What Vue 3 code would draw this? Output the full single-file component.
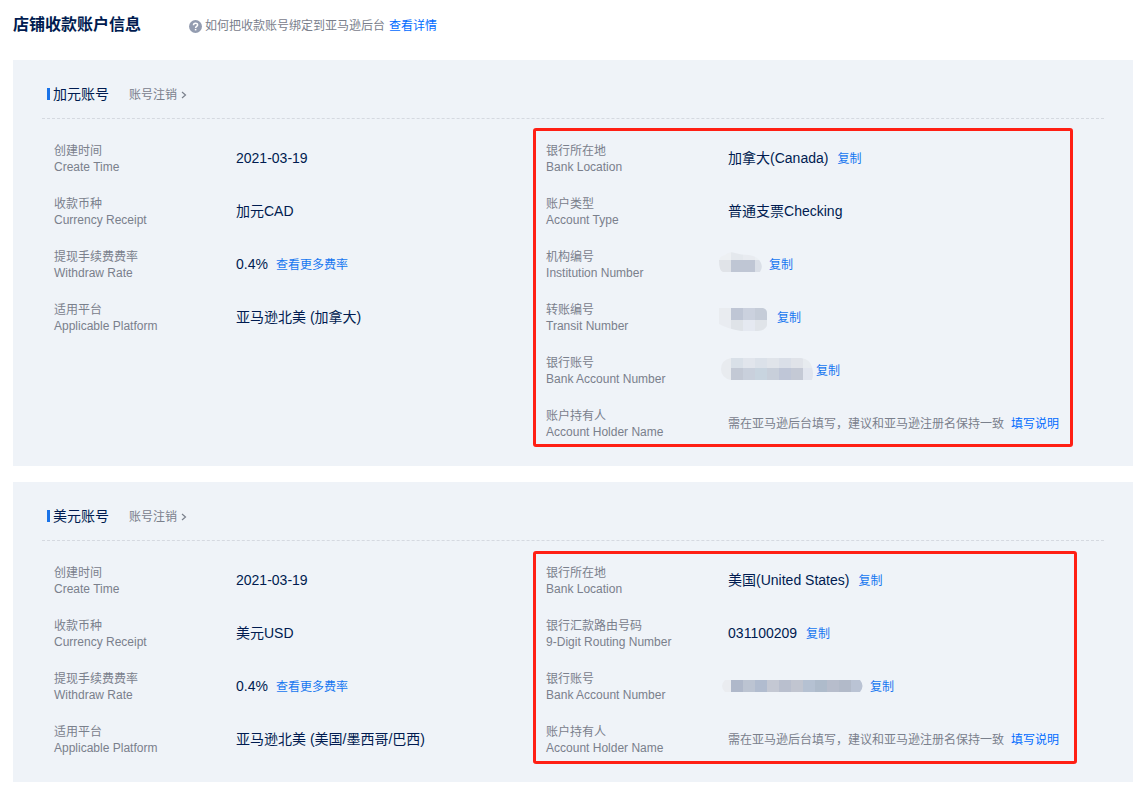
<script setup>
const maskA = {
  width: 41,
  clip: 'M0 9Q1 5 6 4Q10 0 16 2Q22 4 30 4Q39 5 42 12Q44 17 41 21H4Q0 20 0 9Z',
  cells: [
    [0, 0, 12, 9, '#edf0f3'], [12, 0, 12, 9, '#e4e8ed'], [24, 0, 12, 9, '#e8ebf0'], [36, 0, 8, 9, '#ebeff3'],
    [0, 9, 12, 12, '#e0e3e8'], [12, 9, 24, 12, '#bfc6d4'], [36, 9, 8, 12, '#dadfe7']
  ]
}
const maskB = {
  width: 49,
  clip: 'M0 4H44Q48 5 48 9V21Q47 26 39 27H22Q9 25 0 20Z',
  cells: [
    [0, 4, 12, 12, '#e9ecf0'], [12, 4, 12, 12, '#bfc6d5'], [24, 4, 12, 12, '#cbd1de'], [36, 4, 12, 12, '#c5ccd8'],
    [0, 16, 12, 11, '#e9ecf1'], [12, 16, 12, 11, '#dfe3e8'], [24, 16, 12, 11, '#e5e9f1'], [36, 16, 12, 11, '#e0e4e9']
  ]
}
const maskC = {
  width: 88,
  clip: 'M12 1H82Q91 2 93 10Q95 17 93 23H12Q2 21 2 12Q2 3 12 1Z',
  cells: [
    [0, 1, 12, 22, '#e8ebef'],
    ...['#d9e0e8', '#e1e5ec', '#dbe1e9', '#e0e4ea', '#dadfe8', '#e0e3e9'].map((c, i) => [12 + i * 12, 1, 12, 10, c]),
    ...['#c3c9d5', '#c9d0dc', '#c8d4df', '#c8cfda', '#bfc6d7', '#c4c9d5'].map((c, i) => [12 + i * 12, 11, 12, 12, c]),
    [84, 1, 12, 10, '#e7ebef'], [84, 11, 12, 12, '#e1e5ee']
  ]
}
const maskD = {
  width: 142,
  clip: 'M6 7H141Q146 13 141 19H6Q0 13 6 7Z',
  cells: [
    [0, 7, 12, 12, '#eaecf0'],
    ...['#afb8ca', '#bcc4d2', '#b1bccf', '#c4c8d3', '#b9bfce', '#c1c5d0', '#b5c1d2', '#aebbcb', '#b7bdcc', '#b2bac9', '#bac3d4']
      .map((c, i) => [12 + i * 12, 7, 12, 12, c])
  ]
}

const holder = {
  cn: '账户持有人',
  en: 'Account Holder Name',
  note: '需在亚马逊后台填写，建议和亚马逊注册名保持一致',
  link: '填写说明'
}
const basics = (currency, platform) => [
  { cn: '创建时间', en: 'Create Time', value: '2021-03-19' },
  { cn: '收款币种', en: 'Currency Receipt', value: currency },
  { cn: '提现手续费费率', en: 'Withdraw Rate', value: '0.4%', link: '查看更多费率' },
  { cn: '适用平台', en: 'Applicable Platform', value: platform }
]

const accounts = [
  {
    id: 'cad',
    title: '加元账号',
    basic: basics('加元CAD', '亚马逊北美 (加拿大)'),
    bank: [
      { cn: '银行所在地', en: 'Bank Location', value: '加拿大(Canada)', copy: true },
      { cn: '账户类型', en: 'Account Type', value: '普通支票Checking' },
      { cn: '机构编号', en: 'Institution Number', mask: maskA, copy: true },
      { cn: '转账编号', en: 'Transit Number', mask: maskB, copy: true },
      { cn: '银行账号', en: 'Bank Account Number', mask: maskC, copy: true },
      holder
    ]
  },
  {
    id: 'usd',
    title: '美元账号',
    basic: basics('美元USD', '亚马逊北美 (美国/墨西哥/巴西)'),
    bank: [
      { cn: '银行所在地', en: 'Bank Location', value: '美国(United States)', copy: true },
      { cn: '银行汇款路由号码', en: '9-Digit Routing Number', value: '031100209', copy: true },
      { cn: '银行账号', en: 'Bank Account Number', mask: maskD, copy: true },
      holder
    ]
  }
]
</script>

<template>
  <main class="page">
    <header class="page-head">
      <h1>店铺收款账户信息</h1>
      <p class="help">
        <svg class="help-icon" viewBox="0 0 13 13" aria-hidden="true">
          <circle cx="6.5" cy="6.5" r="6.5" fill="#939cb0" />
          <path d="M4.5 5.2C4.5 2.5 8.6 2.5 8.6 5C8.6 6.4 6.6 6.4 6.6 8" fill="none" stroke="#fff" stroke-width="1.5" />
          <rect x="5.8" y="8.9" width="1.6" height="1.5" fill="#fff" />
        </svg>
        <span>如何把收款账号绑定到亚马逊后台</span>
        <a href="#" class="help-link">查看详情</a>
      </p>
    </header>

    <section v-for="acc in accounts" :key="acc.id" class="card" :class="acc.id">
      <div class="card-head">
        <h2>{{ acc.title }}</h2>
        <button type="button" class="cancel">
          账号注销
          <svg class="chevron" viewBox="0 0 6 8" aria-hidden="true">
            <path d="M1 1L4.5 4L1 7" fill="none" stroke="currentColor" stroke-width="1.2" />
          </svg>
        </button>
      </div>
      <div class="card-body">
        <dl v-for="(rows, side) in [acc.basic, acc.bank]" :key="side" :class="{ marked: side === 1 }">
          <div v-for="row in rows" :key="row.en" class="row">
            <dt><span>{{ row.cn }}</span><span>{{ row.en }}</span></dt>
            <dd>
              <span v-if="row.value" class="value">{{ row.value }}</span>
              <span v-if="row.note" class="note">{{ row.note }}</span>
              <svg v-if="row.mask" class="mask" :width="row.mask.width" height="27" aria-hidden="true">
                <clipPath :id="`${acc.id}-${row.mask.width}`"><path :d="row.mask.clip" /></clipPath>
                <g :clip-path="`url(#${acc.id}-${row.mask.width})`" shape-rendering="crispEdges">
                  <rect v-for="(c, i) in row.mask.cells" :key="i" :x="c[0]" :y="c[1]" :width="c[2]" :height="c[3]" :fill="c[4]" />
                </g>
              </svg>
              <a v-if="row.link" href="#" :class="row.note ? 'note-link' : 'link'">{{ row.link }}</a>
              <button v-if="row.copy" type="button" class="copy">复制</button>
            </dd>
          </div>
        </dl>
      </div>
    </section>
  </main>
</template>

<style>
body {
  margin: 0;
  background: #fff;
}
</style>

<style scoped>
.page {
  padding: 0 11px 8px 13px;
  font-family: "Liberation Sans", "Noto Sans CJK SC", sans-serif;
  font-size: 12px;
  line-height: 16px;
  color: #7a808c;
}
h1, h2, p, dl, dd {
  margin: 0;
}
a {
  text-decoration: none;
}
button {
  padding: 0;
  border: 0;
  background: none;
  font: inherit;
  line-height: 16px;
  cursor: pointer;
}
.page-head {
  display: flex;
  align-items: center;
  gap: 48px;
  height: 50px;
  padding-bottom: 10px;
}
h1 {
  font-size: 16px;
  line-height: 24px;
  font-weight: 700;
  color: #001b50;
}
.help {
  display: flex;
  align-items: center;
  padding-top: 2px;
}
.help-icon {
  width: 13px;
  height: 13px;
  margin-right: 3px;
}
.help-link {
  margin-left: 4px;
  color: #006bff;
}
.card {
  padding: 0 29px 16px;
  background: #eff3f8;
}
.card + .card {
  margin-top: 16px;
}
.card-head {
  display: flex;
  align-items: center;
  gap: 20px;
  height: 48px;
  padding: 10px 0 0 5px;
  border-bottom: 1px dashed #d5d9e0;
}
h2 {
  display: flex;
  align-items: center;
  gap: 3px;
  font-size: 14px;
  line-height: 20px;
  font-weight: 400;
  color: #001b50;
}
h2::before {
  content: "";
  width: 3px;
  height: 12px;
  background: #1a73e8;
}
.cancel {
  display: flex;
  align-items: center;
  gap: 4px;
  padding-top: 2px;
  color: #7a808c;
}
.chevron {
  width: 6px;
  height: 8px;
}
.card-body {
  display: grid;
  grid-template-columns: 13fr 15fr;
  align-items: start;
  padding-top: 13px;
}
.marked {
  position: relative;
}
.marked::after {
  content: "";
  position: absolute;
  inset: -4px 31px 3px -2px;
  border: 3px solid #ff1f14;
  border-radius: 3px;
  pointer-events: none;
}
.usd .marked::after {
  inset: -3px 27px 2px -2px;
}
.row {
  display: flex;
  align-items: center;
  height: 53px;
  padding-left: 12px;
  white-space: nowrap;
}
.marked .row {
  padding-left: 11px;
}
dt {
  flex: none;
  width: 182px;
}
dt span {
  display: block;
}
dd {
  display: flex;
  align-items: center;
}
.value {
  padding-bottom: 2px;
  font-size: 14px;
  line-height: 20px;
  color: #001b50;
}
.mask {
  margin-left: -9px;
  overflow: visible;
}
.link, .copy {
  color: #1677f0;
}
.link {
  margin-left: 8px;
}
.copy {
  margin-left: 9px;
}
.note-link {
  margin-left: 7px;
  color: #006bff;
}
</style>
